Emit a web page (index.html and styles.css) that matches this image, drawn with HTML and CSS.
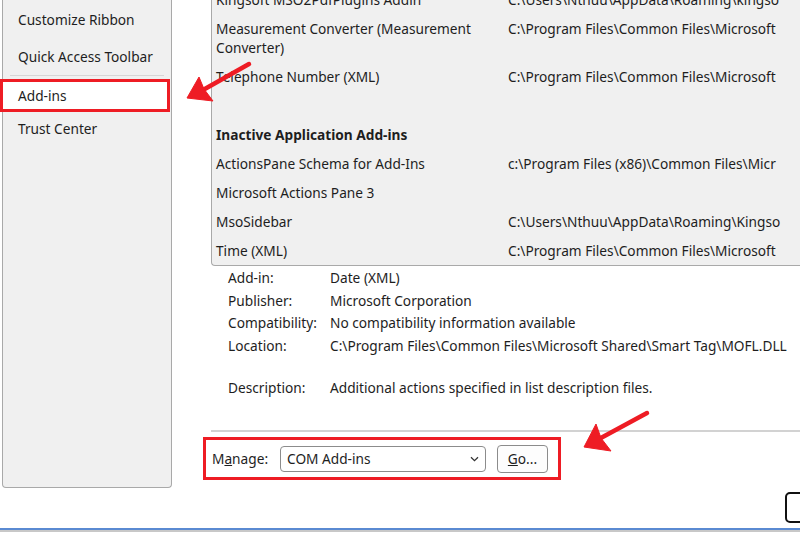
FILE: index.html
```html
<!DOCTYPE html>
<html lang="en">
<head>
  <meta charset="UTF-8" />
  <title>Options - Add-ins</title>
  <link rel="stylesheet" href="styles.css">
</head>
<body>

  <div class="dialog">
    <div class="main">
      <div class="sidebar">
        <div class="nav-item">Customize Ribbon</div>
        <div class="nav-item">Quick Access Toolbar</div>
        <div class="nav-sep"></div>
        <div class="nav-item active">Add-ins</div>
        <div class="nav-item small">Trust Center</div>
      </div>

      <div class="content">
        <div class="addin-list">
          <div class="row"><span class="name">Kingsoft MSO2PdfPlugins Addin</span><span class="path">C:\Users\Nthuu\AppData\Roaming\kingso</span></div>
          <div class="row"><span class="name">Measurement Converter (Measurement Converter)</span><span class="path">C:\Program Files\Common Files\Microsoft</span></div>
          <div class="row"><span class="name">Telephone Number (XML)</span><span class="path">C:\Program Files\Common Files\Microsoft</span></div>
          <div class="row"></div>
          <div class="row group">Inactive Application Add-ins</div>
          <div class="row"><span class="name">ActionsPane Schema for Add-Ins</span><span class="path">c:\Program Files (x86)\Common Files\Micr</span></div>
          <div class="row"><span class="name">Microsoft Actions Pane 3</span><span class="path"></span></div>
          <div class="row"><span class="name">MsoSidebar</span><span class="path">C:\Users\Nthuu\AppData\Roaming\Kingso</span></div>
          <div class="row"><span class="name">Time (XML)</span><span class="path">C:\Program Files\Common Files\Microsoft</span></div>
        </div>

        <div class="details">
          <div class="detail"><span class="key">Add-in:</span><span>Date (XML)</span></div>
          <div class="detail"><span class="key">Publisher:</span><span>Microsoft Corporation</span></div>
          <div class="detail"><span class="key">Compatibility:</span><span>No compatibility information available</span></div>
          <div class="detail"><span class="key">Location:</span><span>C:\Program Files\Common Files\Microsoft Shared\Smart Tag\MOFL.DLL</span></div>
          <div class="detail desc"><span class="key">Description:</span><span>Additional actions specified in list description files.</span></div>
        </div>

        <div class="divider"></div>

        <div class="manage">
          <span class="manage-label">M<u>a</u>nage:</span>
          <div class="select">
            <span>COM Add-ins</span>
            <svg width="9" height="6" viewBox="0 0 9 6"><path d="M1 1.2 L4.5 4.6 L8 1.2" fill="none" stroke="#333" stroke-width="1.3"/></svg>
          </div>
          <button class="go-btn"><u>G</u>o...</button>
        </div>
      </div>
    </div>

    <div class="footer">
      <button class="ok-btn"></button>
    </div>
  </div>

  <svg class="arrows" width="800" height="533" viewBox="0 0 800 533">
    <g fill="#ee1c24" stroke="#ee1c24" stroke-linejoin="round">
      <line x1="249" y1="64" x2="203" y2="90" stroke-width="4.5" stroke-linecap="round"/>
      <polygon points="187,98 199,77 204,89 213,101" stroke-width="1"/>
      <line x1="647" y1="413" x2="599" y2="439" stroke-width="4.5" stroke-linecap="round"/>
      <polygon points="584,447 596,424 601,438 611,451" stroke-width="1"/>
    </g>
  </svg>

</body>
</html>
```

FILE: styles.css
```css
:root {
  --panel: #f0f0f0;
  --line: #a9a9a9;
  --text: #1e1e1e;
  --red: #ee1c24;
}

body {
  margin: 0;
  background: #fff;
  color: var(--text);
  font-family: "Noto Sans", "Open Sans", sans-serif;
  font-size: 13.7px;
  overflow: hidden;
  width: 800px;
  height: 533px;
  position: relative;
}

.dialog {
  height: 533px;
  display: flex;
  flex-direction: column;
}

.main {
  display: flex;
  height: 488px;
}

.sidebar {
  margin-left: 2px;
  width: 170px;
  height: 488px;
  box-sizing: border-box;
  padding-top: 1px;
  background: var(--panel);
  border: 1px solid var(--line);
  border-top: none;
  border-radius: 0 0 4px 4px;
}

.nav-item {
  height: 37px;
  line-height: 37px;
  padding-left: 15px;
}

.nav-sep {
  height: 1px;
  background: #d6d6d6;
  margin: 0 7px 0 7px;
}

.nav-item.active {
  margin-top: 6px;
  margin-right: 4px;
  height: 27px;
  line-height: 27px;
  background: #fff;
  outline: 3px solid var(--red);
}

.nav-item.small {
  margin-top: 6px;
  height: 27px;
  line-height: 27px;
}

.content {
  flex: 1;
  margin-left: 39px;
  min-width: 0;
}

.addin-list {
  margin-top: -16px;
  width: 620px;
  background: var(--panel);
  border: 1px solid var(--line);
  border-right: none;
  border-radius: 0 0 0 4px;
  padding-left: 4px;
}

.row {
  display: flex;
  min-height: 19px;
  line-height: 19px;
  padding: 5px 0;
}

.row .name {
  width: 292px;
  padding-right: 36px;
  box-sizing: border-box;
}

.row .path {
  white-space: nowrap;
}

.row.group {
  font-weight: bold;
}

.details {
  margin-top: 1px;
  padding-left: 17px;
}

.detail {
  display: flex;
  height: 22.7px;
  line-height: 22.7px;
  white-space: nowrap;
}

.detail .key {
  width: 102px;
  flex-shrink: 0;
}

.detail.desc {
  margin-top: 19px;
}

.divider {
  margin-top: 31px;
  height: 2px;
  background: #d2d2d2;
}

.manage {
  margin-top: 5px;
  margin-left: -8px;
  width: 346px;
  height: 37px;
  border: 3px solid var(--red);
  display: flex;
  align-items: center;
  padding-left: 6px;
}

.manage-label {
  width: 68px;
}

.select {
  width: 206px;
  height: 26px;
  box-sizing: border-box;
  border: 1px solid #8c8c8c;
  border-radius: 4px;
  display: flex;
  align-items: center;
  justify-content: space-between;
  padding: 0 6px 0 6px;
  background: #fff;
}

.go-btn {
  margin-left: 11px;
  width: 51px;
  height: 28px;
  border: 1px solid #8c8c8c;
  border-radius: 4px;
  background: #fdfdfd;
  font-family: inherit;
  font-size: 13.7px;
  color: var(--text);
  padding: 0;
}

.footer {
  display: flex;
  justify-content: flex-end;
  align-items: flex-start;
  padding-top: 4px;
  height: 36px;
  border-bottom: 2px solid #5a8ad2;
  box-shadow: 0 2px 0 #c8c8c8;
}

.ok-btn {
  width: 80px;
  height: 31px;
  margin-right: -65px;
  border: 2px solid #111;
  border-radius: 5px;
  background: #fff;
}

.arrows {
  position: absolute;
  left: 0;
  top: 0;
  pointer-events: none;
}
```
